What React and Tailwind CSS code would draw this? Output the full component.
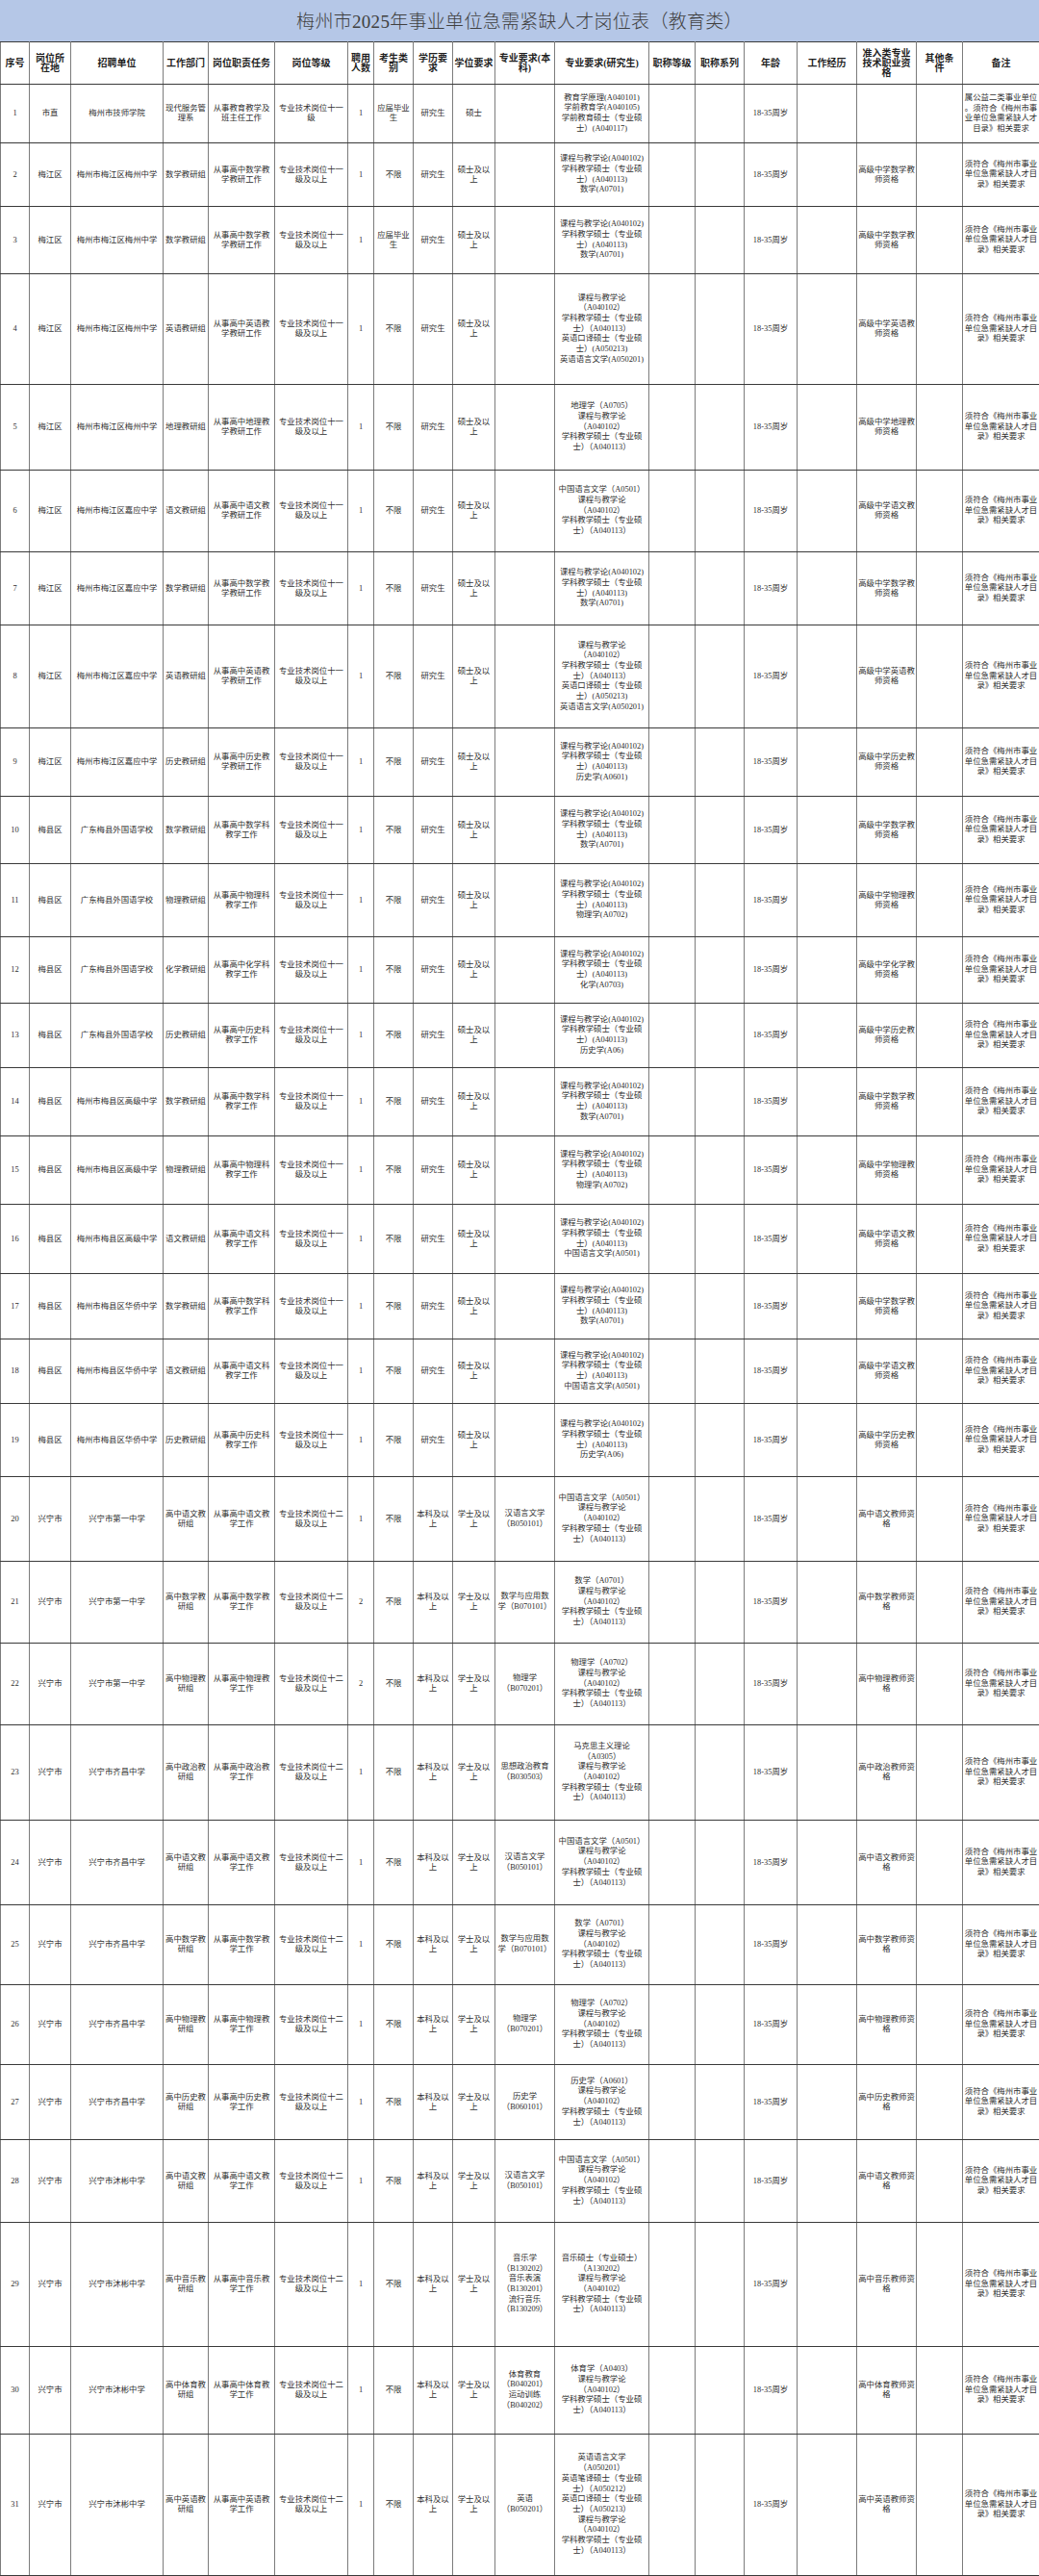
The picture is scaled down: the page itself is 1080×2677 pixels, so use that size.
import React from 'react';

const NOTE = '须符合《梅州市事业\n单位急需紧缺人才目\n录》相关要求';
const KC_H = '课程与教学论(A040102)';
const KC_F = '课程与教学论\n（A040102）';
const XK_H = '学科教学硕士（专业硕\n士）(A040113)';
const XK_F = '学科教学硕士（专业硕\n士）（A040113）';

const hdr = ['序号', '岗位所\n在地', '招聘单位', '工作部门', '岗位职责任务', '岗位等级', '聘用\n人数', '考生类\n别', '学历要\n求', '学位要求', '专业要求(本\n科)', '专业要求(研究生)', '职称等级', '职称系列', '年龄', '工作经历', '准入类专业\n技术职业资\n格', '其他条\n件', '备注'];

const widths = [30, 43, 96, 47, 69, 76, 27, 41, 41, 44, 62, 98, 48, 51, 55, 62, 62, 48, 80];

function gr(n, loc, unit, subj, kind, cand, yjs, h) {
  return {
    n, loc, unit,
    dept: `${subj}教研组`,
    duty: kind === 'a' ? `从事高中${subj}教\n学教研工作` : `从事高中${subj}科\n教学工作`,
    level: '专业技术岗位十一\n级及以上',
    num: '1', cand, edu: '研究生', deg: '硕士及以\n上', bk: '', yjs,
    zr: `高级中学${subj}教\n师资格`, note: NOTE, h,
  };
}

function bc(n, unit, subj, num, bk, yjs, h) {
  return {
    n, loc: '兴宁市', unit,
    dept: `高中${subj}教\n研组`,
    duty: `从事高中${subj}教\n学工作`,
    level: '专业技术岗位十二\n级及以上',
    num, cand: '不限', edu: '本科及以\n上', deg: '学士及以\n上', bk, yjs,
    zr: `高中${subj}教师资\n格`, note: NOTE, h,
  };
}

const withLast = (x) => `${KC_H}\n${XK_H}\n${x}`;
const firstF = (x) => `${x}\n${KC_F}\n${XK_F}`;
const ENG = `${KC_F}\n${XK_F}\n英语口译硕士（专业硕\n士）(A050213)\n英语语言文学(A050201)`;

const MZ = '梅州市梅江区梅州中学';
const JY = '梅州市梅江区嘉应中学';
const WG = '广东梅县外国语学校';
const GJ = '梅州市梅县区高级中学';
const HQ = '梅州市梅县区华侨中学';
const YZ = '兴宁市第一中学';
const QC = '兴宁市齐昌中学';
const MB = '兴宁市沐彬中学';

const rows = [
  {
    n: 1, loc: '市直', unit: '梅州市技师学院', dept: '现代服务管\n理系', duty: '从事教育教学及\n班主任工作',
    level: '专业技术岗位十一\n级', num: '1', cand: '应届毕业\n生', edu: '研究生', deg: '硕士', bk: '',
    yjs: '教育学原理(A040101)\n学前教育学(A040105)\n学前教育硕士（专业硕\n士）(A040117)',
    zr: '', note: '属公益二类事业单位\n。须符合《梅州市事\n业单位急需紧缺人才\n目录》相关要求', h: 61,
  },
  gr(2, '梅江区', MZ, '数学', 'a', '不限', withLast('数学(A0701)'), 66),
  gr(3, '梅江区', MZ, '数学', 'a', '应届毕业\n生', withLast('数学(A0701)'), 70),
  gr(4, '梅江区', MZ, '英语', 'a', '不限', ENG, 115),
  gr(5, '梅江区', MZ, '地理', 'a', '不限', firstF('地理学（A0705）'), 89),
  gr(6, '梅江区', JY, '语文', 'a', '不限', firstF('中国语言文学（A0501）'), 85),
  gr(7, '梅江区', JY, '数学', 'a', '不限', withLast('数学(A0701)'), 76),
  gr(8, '梅江区', JY, '英语', 'a', '不限', ENG, 107),
  gr(9, '梅江区', JY, '历史', 'a', '不限', withLast('历史学(A0601)'), 71),
  gr(10, '梅县区', WG, '数学', 'b', '不限', withLast('数学(A0701)'), 70),
  gr(11, '梅县区', WG, '物理', 'b', '不限', withLast('物理学(A0702)'), 76),
  gr(12, '梅县区', WG, '化学', 'b', '不限', withLast('化学(A0703)'), 69),
  gr(13, '梅县区', WG, '历史', 'b', '不限', withLast('历史学(A06)'), 67),
  gr(14, '梅县区', GJ, '数学', 'b', '不限', withLast('数学(A0701)'), 71),
  gr(15, '梅县区', GJ, '物理', 'b', '不限', withLast('物理学(A0702)'), 71),
  gr(16, '梅县区', GJ, '语文', 'b', '不限', withLast('中国语言文学(A0501)'), 72),
  gr(17, '梅县区', HQ, '数学', 'b', '不限', withLast('数学(A0701)'), 68),
  gr(18, '梅县区', HQ, '语文', 'b', '不限', withLast('中国语言文学(A0501)'), 67),
  gr(19, '梅县区', HQ, '历史', 'b', '不限', withLast('历史学(A06)'), 76),
  bc(20, YZ, '语文', '1', '汉语言文学\n（B050101）', firstF('中国语言文学（A0501）'), 88),
  bc(21, YZ, '数学', '2', '数学与应用数\n学（B070101）', firstF('数学（A0701）'), 85),
  bc(22, YZ, '物理', '2', '物理学\n（B070201）', firstF('物理学（A0702）'), 85),
  bc(23, QC, '政治', '1', '思想政治教育\n（B030503）', firstF('马克思主义理论\n（A0305）'), 99),
  bc(24, QC, '语文', '1', '汉语言文学\n（B050101）', firstF('中国语言文学（A0501）'), 88),
  bc(25, QC, '数学', '1', '数学与应用数\n学（B070101）', firstF('数学（A0701）'), 83),
  bc(26, QC, '物理', '1', '物理学\n（B070201）', firstF('物理学（A0702）'), 83),
  bc(27, QC, '历史', '1', '历史学\n（B060101）', firstF('历史学（A0601）'), 78),
  bc(28, MB, '语文', '1', '汉语言文学\n（B050101）', firstF('中国语言文学（A0501）'), 86),
  bc(29, MB, '音乐', '1', '音乐学\n（B130202）\n音乐表演\n（B130201）\n流行音乐\n（B130209）', firstF('音乐硕士（专业硕士）\n（A130202）'), 129),
  bc(30, MB, '体育', '1', '体育教育\n（B040201）\n运动训练\n（B040202）', firstF('体育学（A0403）'), 91),
  bc(31, MB, '英语', '1', '英语\n（B050201）', `英语语言文学\n（A050201）\n英语笔译硕士（专业硕\n士）（A050212）\n英语口译硕士（专业硕\n士）（A050213）\n${KC_F}\n${XK_F}`, 147),
];

const cell = 'border-x border-x-[#7c7c7c] border-y border-y-[#3a3a3a] text-center align-middle whitespace-pre p-0';

export default function App() {
  return (
    <div className="w-[1080px] bg-white text-[#2e2e2e] font-['Liberation_Serif','Noto_Sans_CJK_SC',serif]">
      <div className="h-[43px] bg-[#b5c7e7] flex items-center justify-center pt-[4px]">
        <span className="text-[19px] font-light text-[#404040] font-['Liberation_Serif','Noto_Sans_CJK_SC',serif] tracking-[0.3px]">
          梅州市2025年事业单位急需紧缺人才岗位表（教育类）
        </span>
      </div>
      <table className="w-[1080px] table-fixed border-collapse">
        <colgroup>
          {widths.map((w, i) => (
            <col key={i} style={{ width: `${w}px` }} />
          ))}
        </colgroup>
        <thead>
          <tr className="h-[44px]">
            {hdr.map((t, i) => (
              <th key={i} className={`${cell} text-[10px] leading-[10px] font-bold text-[#1f1f1f]`}>
                {t}
              </th>
            ))}
          </tr>
        </thead>
        <tbody className="text-[8.4px]">
          {rows.map((r) => (
            <tr key={r.n} style={{ height: `${r.h}px` }}>
              <td className={`${cell} leading-[10px]`}>{r.n}</td>
              <td className={`${cell} leading-[10px]`}>{r.loc}</td>
              <td className={`${cell} leading-[10px]`}>{r.unit}</td>
              <td className={`${cell} leading-[10px]`}>{r.dept}</td>
              <td className={`${cell} leading-[10px]`}>{r.duty}</td>
              <td className={`${cell} leading-[10px]`}>{r.level}</td>
              <td className={`${cell} leading-[10px]`}>{r.num}</td>
              <td className={`${cell} leading-[10px]`}>{r.cand}</td>
              <td className={`${cell} leading-[10px]`}>{r.edu}</td>
              <td className={`${cell} leading-[10px]`}>{r.deg}</td>
              <td className={`${cell} leading-[10.7px]`}>{r.bk}</td>
              <td className={`${cell} leading-[10.7px]`}>{r.yjs}</td>
              <td className={cell}></td>
              <td className={cell}></td>
              <td className={`${cell} leading-[10px]`}>18-35周岁</td>
              <td className={cell}></td>
              <td className={`${cell} leading-[10px]`}>{r.zr}</td>
              <td className={cell}></td>
              <td className={`${cell} leading-[10.5px]`}>{r.note}</td>
            </tr>
          ))}
        </tbody>
      </table>
    </div>
  );
}
